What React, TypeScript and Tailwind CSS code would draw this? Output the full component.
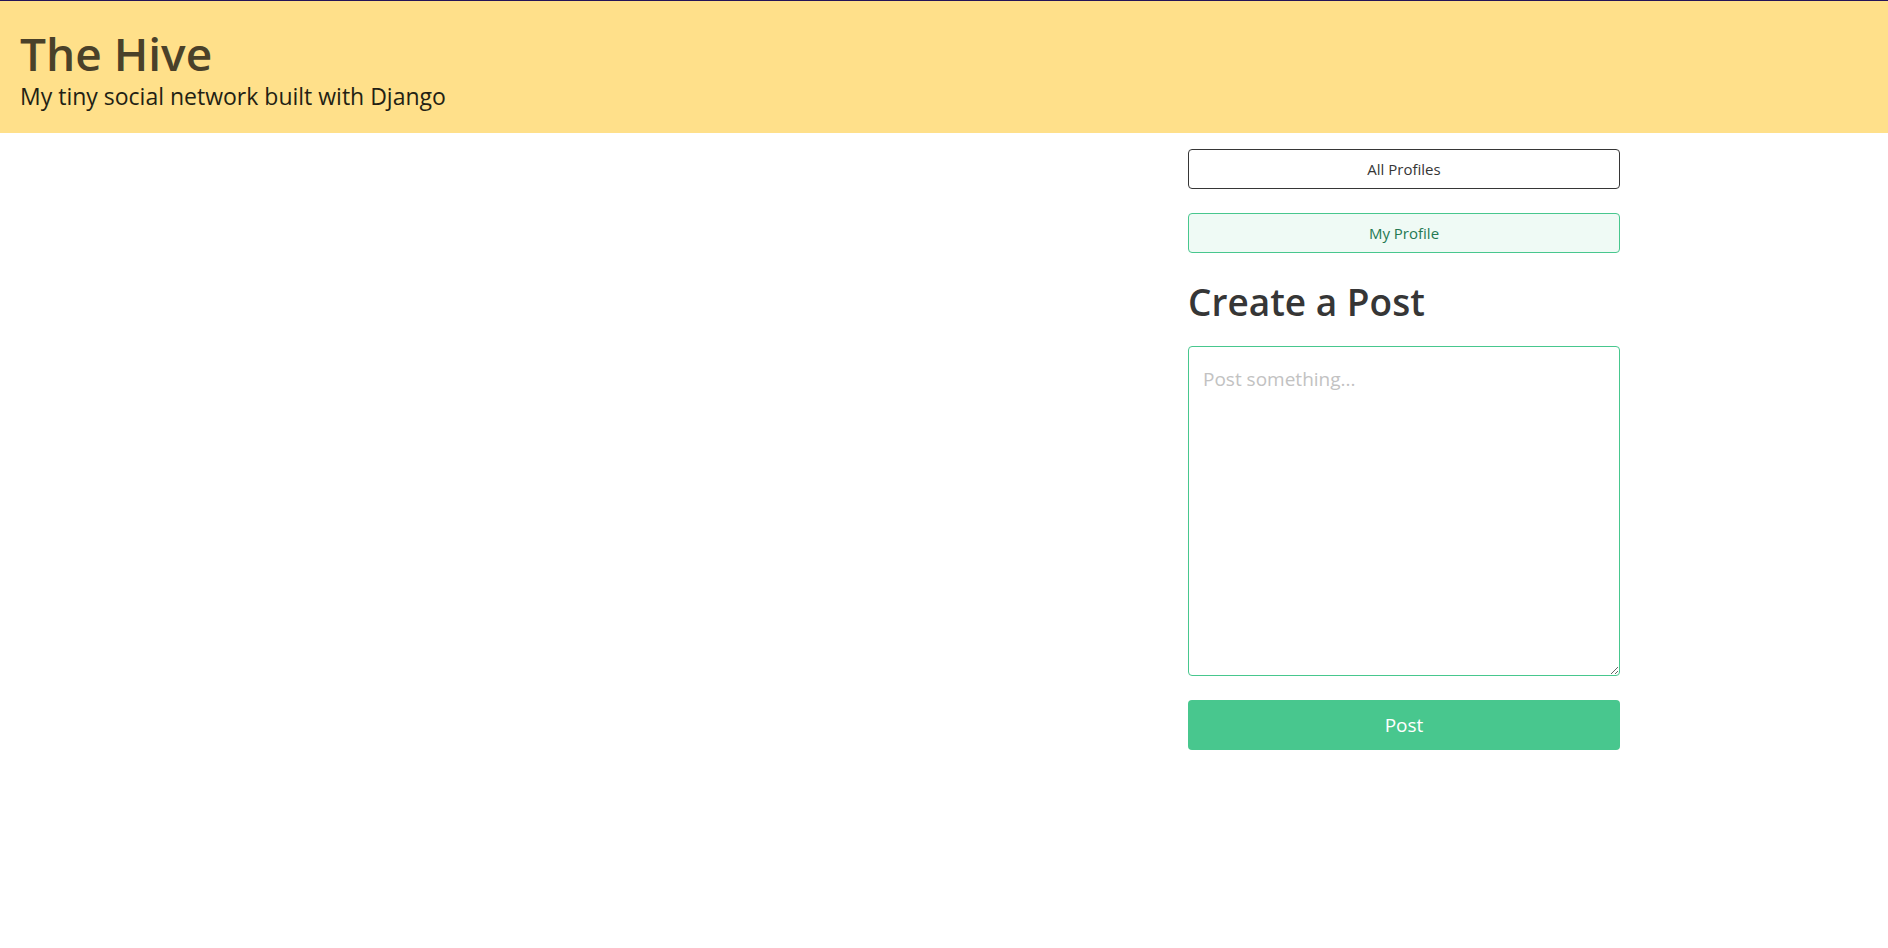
export default function App() {
  const font = { fontFamily: '"Open Sans", "Noto Sans", sans-serif' };
  return (
    <div className="min-h-screen bg-white" style={font}>
      <header className="bg-[#ffe08a] border-t border-[#241458] h-[133px] px-[20px] pt-[24px]">
        <h1 className="text-[46px] leading-[56px] font-semibold text-[#4a4129]">The Hive</h1>
        <p className="text-[23px] leading-[30px] text-[#231f14]">My tiny social network built with Django</p>
      </header>

      <main className="grid grid-cols-[1188px_432px]">
        <div />
        <div className="flex flex-col pt-4">
          <button className="h-10 rounded border border-[#363636] bg-white pt-px text-[15px] text-[#363636]">
            All Profiles
          </button>
          <button className="mt-6 h-10 rounded border border-[#48c78e] bg-[#effaf5] pt-px text-[15px] text-[#257953]">
            My Profile
          </button>
          <h2 className="mt-[25px] text-[37px] leading-[48px] font-semibold text-[#363636]">Create a Post</h2>
          <textarea
            placeholder="Post something..."
            className="mt-[20px] h-[330px] w-full rounded border border-[#48c78e] px-[14px] pt-[18px] pb-[12px] text-[19px] text-[#363636] placeholder:text-[#c2c2c2] outline-none"
          />
          <button className="mt-[24px] h-[50px] rounded bg-[#48c78e] pt-px text-[19px] text-white">Post</button>
        </div>
      </main>
    </div>
  );
}
